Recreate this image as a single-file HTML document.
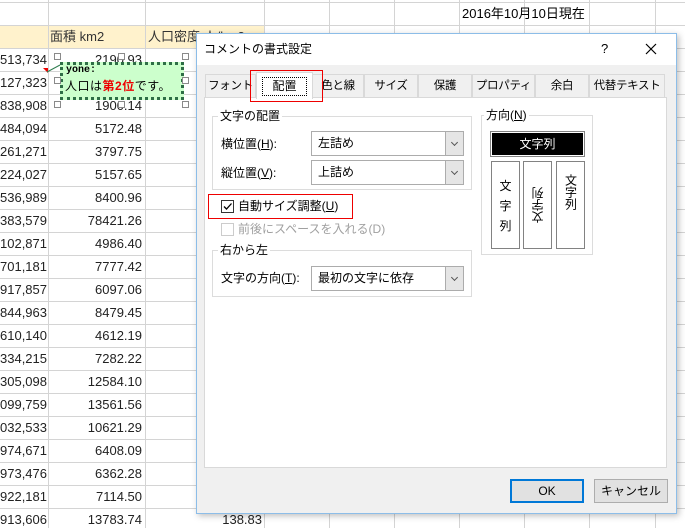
<!DOCTYPE html>
<html><head><meta charset="utf-8">
<style>
*{margin:0;padding:0;box-sizing:border-box}
body{width:685px;height:528px;overflow:hidden;background:#fff;position:relative;font-family:"Liberation Sans","Noto Sans CJK JP",sans-serif;font-size:12px;color:#000}
.a{position:absolute}
.vl{position:absolute;top:0;width:1px;height:528px;background:#d4d4d4}
.hl{position:absolute;left:0;width:685px;height:1px;background:#d4d4d4}
.num{position:absolute;font-size:13px;color:#222;text-align:right;height:23px;line-height:23px}
.tab{position:absolute;top:74px;height:23px;border:1px solid #d9d9d9;border-bottom:none;background:#f0f0f0;text-align:center;line-height:22px;font-size:11.5px;letter-spacing:-0.3px;white-space:nowrap;overflow:hidden}
.grp{position:absolute;border:1px solid #dcdcdc}
.gl{position:absolute;background:#fff;padding:0 2px;font-size:12px;line-height:14px}
.dd{position:absolute;left:311px;width:153px;height:25px;border:1px solid #acacac;background:#fff;font-size:12px;line-height:23px;padding-left:6px}
.dd b{position:absolute;right:0;top:0;width:18px;height:23px;background:#e5e5e5;border-left:1px solid #acacac}
.dd b:after{content:"";position:absolute;left:6px;top:8px;width:4px;height:4px;border-right:1px solid #555;border-bottom:1px solid #555;transform:rotate(45deg)}
.lbl{position:absolute;font-size:12px;line-height:16px}
.vbox{position:absolute;top:161px;width:29px;height:88px;border:1px solid #828282;background:#fff;font-size:12px;line-height:20px;text-align:center;padding-top:14px}
.h{position:absolute;width:7px;height:7px;border:1px solid #8a8a8a;background:#fff}
</style></head><body>
<div class="a" style="left:0;top:25px;width:264px;height:23px;background:#fff2cc"></div>
<div class="vl" style="left:48px"></div><div class="vl" style="left:145px"></div><div class="vl" style="left:264px"></div><div class="vl" style="left:329px"></div><div class="vl" style="left:394px"></div><div class="vl" style="left:459px"></div><div class="vl" style="left:524px"></div><div class="vl" style="left:589px"></div><div class="vl" style="left:655px"></div>
<div class="hl" style="top:2px"></div><div class="hl" style="top:25px"></div><div class="hl" style="top:48px"></div><div class="hl" style="top:71px"></div><div class="hl" style="top:94px"></div><div class="hl" style="top:117px"></div><div class="hl" style="top:140px"></div><div class="hl" style="top:163px"></div><div class="hl" style="top:186px"></div><div class="hl" style="top:209px"></div><div class="hl" style="top:232px"></div><div class="hl" style="top:255px"></div><div class="hl" style="top:278px"></div><div class="hl" style="top:301px"></div><div class="hl" style="top:324px"></div><div class="hl" style="top:347px"></div><div class="hl" style="top:370px"></div><div class="hl" style="top:393px"></div><div class="hl" style="top:416px"></div><div class="hl" style="top:439px"></div><div class="hl" style="top:462px"></div><div class="hl" style="top:485px"></div><div class="hl" style="top:508px"></div>
<div class="a" style="left:462px;top:3px;font-size:13px;line-height:22px">2016年10月10日現在</div>
<div class="a" style="left:50px;top:25px;font-size:13px;line-height:23px;color:#333">面積 km2</div>
<div class="a" style="left:148px;top:25px;font-size:13px;line-height:23px;color:#333">人口密度 人/km2</div>
<div class="num" style="left:0;width:45px;top:48px">513,734</div><div class="num" style="left:80px;width:62px;top:48px">2190.93</div>
<div class="num" style="left:0;width:45px;top:71px">127,323</div>
<div class="num" style="left:0;width:45px;top:94px">838,908</div><div class="num" style="left:80px;width:62px;top:94px">1900.14</div>
<div class="num" style="left:0;width:45px;top:117px">484,094</div><div class="num" style="left:80px;width:62px;top:117px">5172.48</div>
<div class="num" style="left:0;width:45px;top:140px">261,271</div><div class="num" style="left:80px;width:62px;top:140px">3797.75</div>
<div class="num" style="left:0;width:45px;top:163px">224,027</div><div class="num" style="left:80px;width:62px;top:163px">5157.65</div>
<div class="num" style="left:0;width:45px;top:186px">536,989</div><div class="num" style="left:80px;width:62px;top:186px">8400.96</div>
<div class="num" style="left:0;width:45px;top:209px">383,579</div><div class="num" style="left:80px;width:62px;top:209px">78421.26</div>
<div class="num" style="left:0;width:45px;top:232px">102,871</div><div class="num" style="left:80px;width:62px;top:232px">4986.40</div>
<div class="num" style="left:0;width:45px;top:255px">701,181</div><div class="num" style="left:80px;width:62px;top:255px">7777.42</div>
<div class="num" style="left:0;width:45px;top:278px">917,857</div><div class="num" style="left:80px;width:62px;top:278px">6097.06</div>
<div class="num" style="left:0;width:45px;top:301px">844,963</div><div class="num" style="left:80px;width:62px;top:301px">8479.45</div>
<div class="num" style="left:0;width:45px;top:324px">610,140</div><div class="num" style="left:80px;width:62px;top:324px">4612.19</div>
<div class="num" style="left:0;width:45px;top:347px">334,215</div><div class="num" style="left:80px;width:62px;top:347px">7282.22</div>
<div class="num" style="left:0;width:45px;top:370px">305,098</div><div class="num" style="left:80px;width:62px;top:370px">12584.10</div>
<div class="num" style="left:0;width:45px;top:393px">099,759</div><div class="num" style="left:80px;width:62px;top:393px">13561.56</div>
<div class="num" style="left:0;width:45px;top:416px">032,533</div><div class="num" style="left:80px;width:62px;top:416px">10621.29</div>
<div class="num" style="left:0;width:45px;top:439px">974,671</div><div class="num" style="left:80px;width:62px;top:439px">6408.09</div>
<div class="num" style="left:0;width:45px;top:462px">973,476</div><div class="num" style="left:80px;width:62px;top:462px">6362.28</div>
<div class="num" style="left:0;width:45px;top:485px">922,181</div><div class="num" style="left:80px;width:62px;top:485px">7114.50</div>
<div class="num" style="left:0;width:45px;top:508px">913,606</div><div class="num" style="left:80px;width:62px;top:508px">13783.74</div>
<div class="num" style="left:200px;width:62px;top:508px">138.83</div>
<div class="a" style="left:43px;top:68px;width:0;height:0;border-left:5px solid transparent;border-top:5px solid #e00"></div>
<svg class="a" style="left:46px;top:64px" width="16" height="10"><line x1="1" y1="8" x2="14" y2="1" stroke="#2e7d4f" stroke-width="1"/></svg>
<div class="a" style="left:60px;top:62px;width:124px;height:38px;background:#ccffcc;border:3px dotted #2e6e46"></div>
<div class="a" style="left:66px;top:65px;font-family:'Liberation Mono',monospace;font-weight:bold;font-size:10px;line-height:12px">yone:</div>
<div class="a" style="left:65px;top:78px;font-size:12px;line-height:16px;letter-spacing:0.5px">人口は<b style="color:#e00">第2位</b>です。</div>
<div class="h" style="left:54px;top:53px"></div><div class="h" style="left:182px;top:53px"></div><div class="h" style="left:54px;top:77px"></div><div class="h" style="left:182px;top:77px"></div><div class="h" style="left:54px;top:101px"></div><div class="h" style="left:182px;top:101px"></div><div class="h" style="left:118px;top:53px"></div><div class="h" style="left:118px;top:101px"></div>
<div class="a" style="left:196px;top:33px;width:481px;height:481px;background:#f0f0f0;border:1px solid #8cbde8;box-shadow:2px 2px 6px rgba(0,0,0,.25)"></div>
<div class="a" style="left:197px;top:34px;width:479px;height:31px;background:#fff"></div>
<div class="a" style="left:204px;top:40px;font-size:12px;line-height:18px">コメントの書式設定</div>
<div class="a" style="left:601px;top:40px;font-size:13px;line-height:18px">?</div>
<svg class="a" style="left:645px;top:43px" width="12" height="12"><path d="M1 1L11 11M11 1L1 11" stroke="#000" stroke-width="1.2"/></svg>
<div class="a" style="left:204px;top:97px;width:463px;height:371px;background:#fff;border:1px solid #d9d9d9"></div>
<div class="tab" style="left:205px;width:51px">フォント</div>
<div class="tab" style="left:312px;width:52px">色と線</div>
<div class="tab" style="left:364px;width:54px">サイズ</div>
<div class="tab" style="left:418px;width:54px">保護</div>
<div class="tab" style="left:472px;width:63px">プロパティ</div>
<div class="tab" style="left:535px;width:54px">余白</div>
<div class="tab" style="left:589px;width:76px">代替テキスト</div>
<div class="a" style="left:256px;top:72px;width:57px;height:27px;background:#fff;border:1px solid #d9d9d9;border-bottom:none"></div>
<div class="a" style="left:262px;top:77px;width:45px;height:19px;border:1px dotted #000;text-align:center;line-height:17px;font-size:12px">配置</div>
<div class="a" style="left:250px;top:70px;width:73px;height:32px;border:1px solid #e00"></div>
<div class="grp" style="left:212px;top:116px;width:260px;height:74px"></div>
<div class="gl" style="left:218px;top:109px">文字の配置</div>
<div class="lbl" style="left:221px;top:136px">横位置(<u>H</u>):</div>
<div class="dd" style="top:131px">左詰め<b></b></div>
<div class="lbl" style="left:221px;top:165px">縦位置(<u>V</u>):</div>
<div class="dd" style="top:160px">上詰め<b></b></div>
<div class="a" style="left:208px;top:194px;width:145px;height:25px;border:1px solid #e00"></div>
<div class="a" style="left:221px;top:200px;width:13px;height:13px;border:1px solid #333;background:#fff"></div>
<svg class="a" style="left:222px;top:201px" width="11" height="11"><path d="M2 5.5L4.5 8L9.5 2.5" stroke="#000" stroke-width="1.3" fill="none"/></svg>
<div class="lbl" style="left:238px;top:198px">自動サイズ調整(<u>U</u>)</div>
<div class="a" style="left:221px;top:223px;width:13px;height:13px;border:1px solid #ccc;background:#fff"></div>
<div class="lbl" style="left:238px;top:221px;color:#a0a0a0">前後にスペースを入れる(D)</div>
<div class="grp" style="left:212px;top:250px;width:260px;height:47px"></div>
<div class="gl" style="left:218px;top:243px">右から左</div>
<div class="lbl" style="left:221px;top:270px">文字の方向(<u>T</u>):</div>
<div class="dd" style="top:266px">最初の文字に依存<b></b></div>
<div class="grp" style="left:481px;top:115px;width:112px;height:140px"></div>
<div class="gl" style="left:484px;top:108px">方向(<u>N</u>)</div>
<div class="a" style="left:490px;top:131px;width:95px;height:26px;border:1px solid #828282;padding:1px"><div style="background:#000;color:#fff;height:22px;text-align:center;line-height:22px;font-size:12px">文字列</div></div>
<div class="vbox" style="left:491px">文<br>字<br>列</div>
<div class="vbox" style="left:523px;padding-top:0"></div>
<div class="a" style="left:529px;top:178px;width:18px;height:54px;writing-mode:vertical-rl;transform:rotate(180deg);font-size:12px;line-height:18px;text-align:center">文字列</div>
<div class="vbox" style="left:556px;padding-top:12px"><div style="display:inline-block;writing-mode:vertical-rl;line-height:18px">文字列</div></div>
<div class="a" style="left:510px;top:479px;width:74px;height:24px;border:2px solid #0078d7;background:#e1e1e1;text-align:center;line-height:20px;font-size:12px">OK</div>
<div class="a" style="left:594px;top:479px;width:74px;height:24px;border:1px solid #adadad;background:#e1e1e1;text-align:center;line-height:22px;font-size:12px">キャンセル</div>
</body></html>
